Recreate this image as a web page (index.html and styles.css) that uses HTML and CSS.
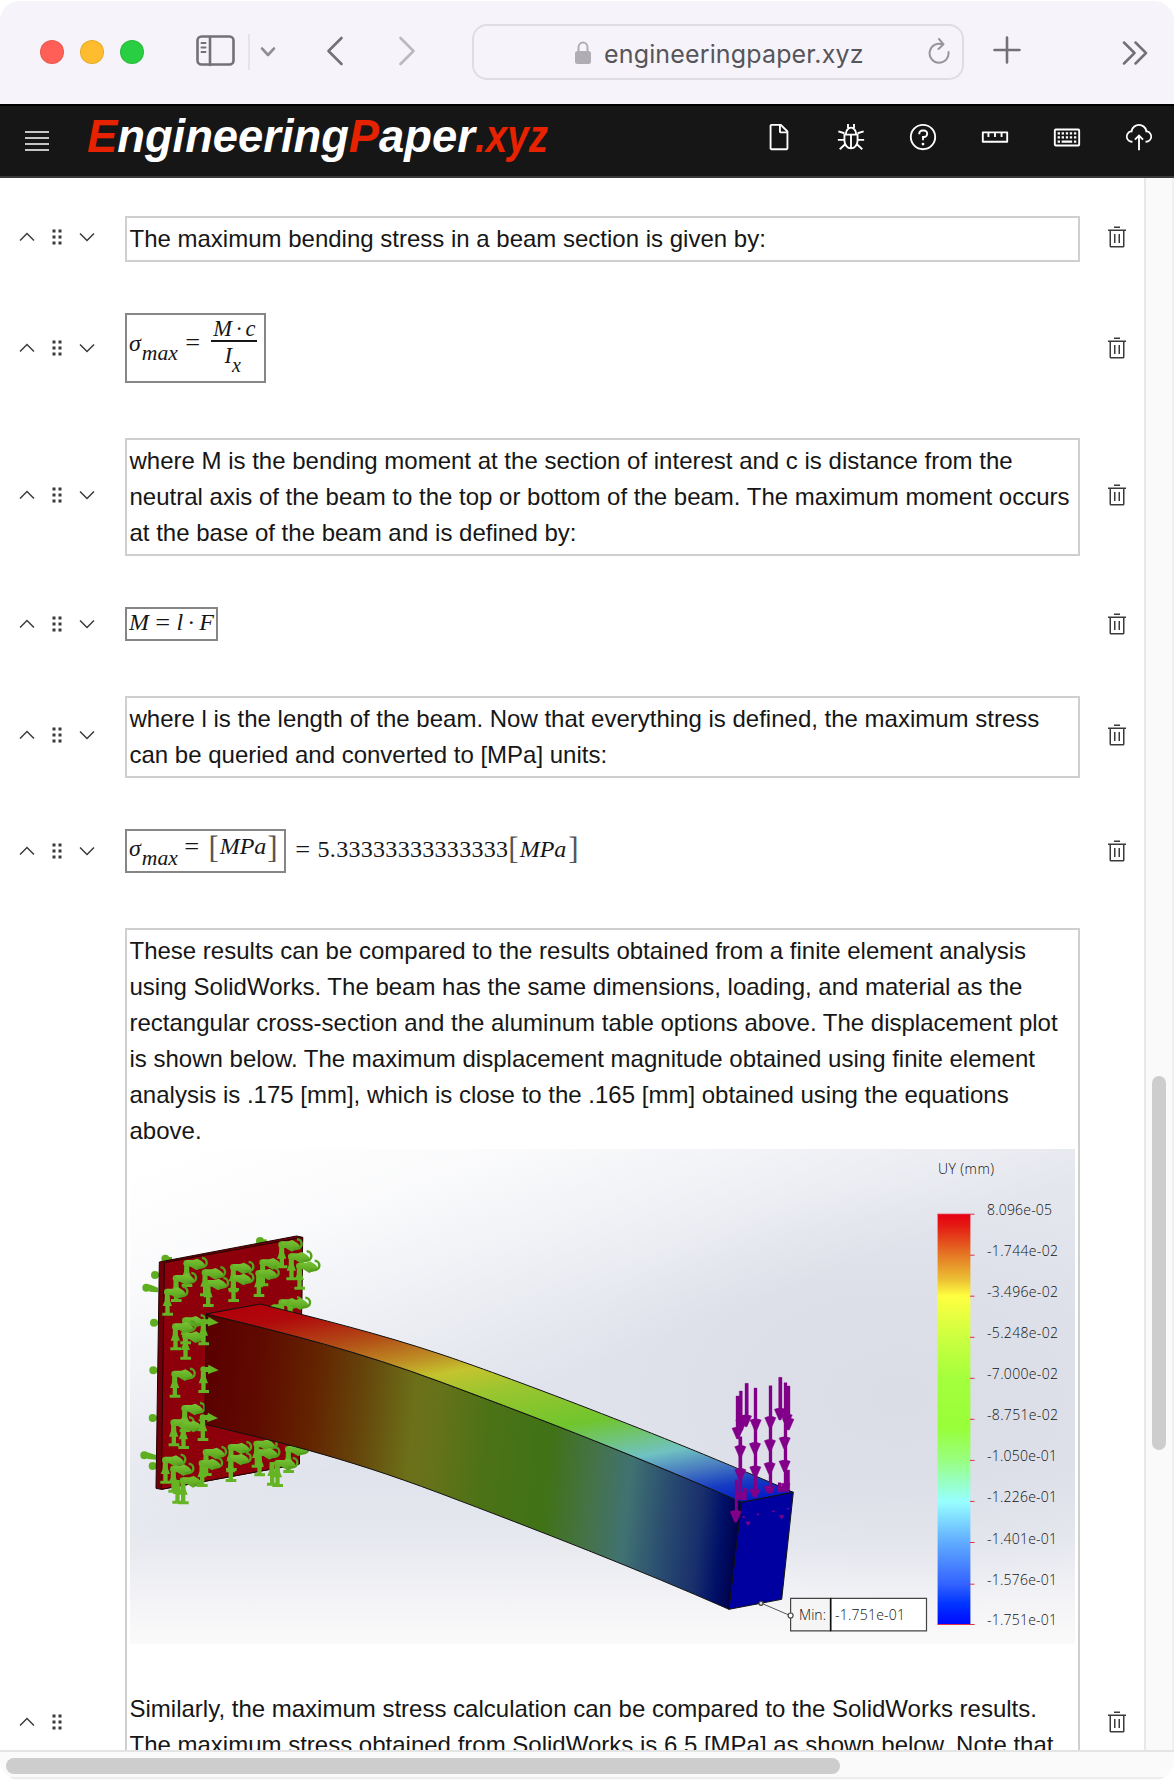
FILE: index.html
```html
<!DOCTYPE html>
<html lang="en">
<head>
<meta charset="utf-8">
<title>EngineeringPaper.xyz</title>
<link rel="stylesheet" href="styles.css">
</head>
<body>
<svg class="defs" aria-hidden="true">
  <symbol id="up" viewBox="0 0 32 32"><path d="M16 10 26 20 24.6 21.4 16 12.8 7.4 21.4 6 20z"/></symbol>
  <symbol id="down" viewBox="0 0 32 32"><path d="M16 22 6 12 7.4 10.6 16 19.2 24.6 10.6 26 12z"/></symbol>
  <symbol id="drag" viewBox="0 0 32 32"><path d="M10 6h4v4h-4zM18 6h4v4h-4zM10 14h4v4h-4zM18 14h4v4h-4zM10 22h4v4h-4zM18 22h4v4h-4z"/></symbol>
  <symbol id="trash" viewBox="0 0 32 32"><path d="M12 12h2v12h-2zM18 12h2v12h-2zM4 6v2h2v20a2 2 0 0 0 2 2h16a2 2 0 0 0 2-2V8h2V6zM8 28V8h16v20zM12 2h8v2h-8z"/></symbol>
</svg>
<div class="window">
  <header class="browser">
    <div class="lights"><i class="red"></i><i class="amber"></i><i class="green"></i></div>
    <svg class="sidebar" viewBox="0 0 40 32"><rect x="1.5" y="1.5" width="36" height="28" rx="4"/><path d="M14 2v28"/><path class="thin" d="M5.5 8h4M5.5 12.500h4M5.500 17h4"/></svg>
    <span class="divider"></span>
    <svg class="caret" viewBox="0 0 16 12"><path d="M2 2.500l6 6.500 6-6.500"/></svg>
    <svg class="back" viewBox="0 0 18 30"><path d="M15.500 2 2.500 15l13 13"/></svg>
    <svg class="fwd" viewBox="0 0 18 30"><path d="M2.500 2l13 13-13 13"/></svg>
    <div class="address">
      <svg class="lock" viewBox="0 0 16 24"><rect x="0" y="10" width="16" height="13" rx="2.500"/><path d="M3.500 11V6.500a4.500 5 0 0 1 9 0V11"/></svg>
      <span class="url">engineeringpaper.xyz</span>
      <svg class="reload" viewBox="0 0 22 26"><path d="M14.500 6.400A9.500 9.500 0 1 0 20.500 14M11 1l4.500 5.300L10.500 11"/></svg>
    </div>
    <svg class="plus" viewBox="0 0 28 28"><path d="M14 1.500v25M1.500 14h25"/></svg>
    <svg class="more" viewBox="0 0 26 24"><path d="M2 1.500 12.500 12 2 22.500M13.500 1.500 24 12 13.500 22.500"/></svg>
  </header>

  <nav class="appbar">
    <svg class="menu" viewBox="0 0 24 20"><path d="M0 1h24M0 7h24M0 13h24M0 19h24"/></svg>
    <h1 class="logo"><b>E</b>ngineering<b>P</b>aper<b class="tld">.xyz</b></h1>
    <div class="tools">
      <svg viewBox="0 0 32 32"><path d="M25.700 9.300l-7-7C18.500 2.100 18.300 2 18 2H8C6.900 2 6 2.900 6 4v24c0 1.100.9 2 2 2h16c1.100 0 2-.9 2-2V10c0-.3-.1-.5-.3-.7zM18 4.400l5.600 5.600H18zM24 28H8V4h8v6c0 1.100.9 2 2 2h6z"/></svg>
      <svg class="line" viewBox="0 0 32 32"><path d="M9 13.500h14V20a7 8 0 0 1-14 0zM10.500 13a5.500 7 0 0 1 11 0M16 14v13M12.800 6.500V2M19.200 6.500V2M9 12 2.500 10M23 12l6.500-2M9 19H2M23 19h7M10 23.500 4 29M22 23.500l6 5.500"/></svg>
      <svg viewBox="0 0 32 32"><path d="M16 2a14 14 0 1 0 14 14A14 14 0 0 0 16 2zm0 26a12 12 0 1 1 12-12 12 12 0 0 1-12 12z"/><circle cx="16" cy="23.500" r="1.500"/><path d="M17 8h-1.500A4.490 4.490 0 0 0 11 12.500v.5h2v-.5a2.500 2.500 0 0 1 2.500-2.500H17a2.500 2.500 0 0 1 0 5h-2v4.500h2V17a4.500 4.500 0 0 0 0-9z"/></svg>
      <svg viewBox="0 0 32 32"><path d="M29 10H3a1 1 0 0 0-1 1v10a1 1 0 0 0 1 1h26a1 1 0 0 0 1-1V11a1 1 0 0 0-1-1zm-1 10H4v-8h4v4h2v-4h5v4h2v-4h5v4h2v-4h4z"/></svg>
      <svg viewBox="0 0 32 32"><path d="M28 26H4a2 2 0 0 1-2-2V9a2 2 0 0 1 2-2h24a2 2 0 0 1 2 2v15a2 2 0 0 1-2 2zM4 9v15h24V9zM6 11h2.500v2.300H6zM10.300 11h2.500v2.300h-2.500zM14.700 11h2.500v2.300h-2.500zM19 11h2.500v2.300H19zM23.400 11h2.500v2.300h-2.500zM6 15.300h2.500v2.300H6zM10.300 15.300h2.500v2.300h-2.500zM14.700 15.300h2.500v2.300h-2.500zM19 15.300h2.500v2.300H19zM23.400 15.300h2.500v2.300h-2.500zM6 19.700h2.500V22H6zM10.300 19.700h11.200V22H10.300zM23.400 19.700h2.500V22h-2.500z"/></svg>
      <svg viewBox="0 0 32 32"><path d="M11 18l1.410 1.410L15 16.830V30h2V16.830l2.590 2.580L21 18l-5-5z"/><path d="M23.500 22H23v-2h.5a4.500 4.500 0 0 0 .36-9H23l-.1-.82a7 7 0 0 0-13.880 0L9 11h-.86a4.500 4.500 0 0 0 .36 9H9v2h-.5A6.500 6.500 0 0 1 7.200 9.140a9 9 0 0 1 17.600 0A6.500 6.500 0 0 1 23.500 22z"/></svg>
    </div>
  </nav>

  <div class="body">
    <main class="sheet">
      <section class="cell text first">
        <div class="controls"><svg><use href="#up"/></svg><svg><use href="#drag"/></svg><svg><use href="#down"/></svg></div>
        <div class="note">The maximum bending stress in a beam section is given by:</div>
        <svg class="trash"><use href="#trash"/></svg>
      </section>

      <section class="cell math">
        <div class="controls"><svg><use href="#up"/></svg><svg><use href="#drag"/></svg><svg><use href="#down"/></svg></div>
        <div class="formula stress">
          <span class="sym">σ<sub>max</sub></span><span class="eq">=</span>
          <span class="frac"><span class="num">M<em>·</em>c</span><span class="den">I<sub>x</sub></span></span>
        </div>
        <svg class="trash"><use href="#trash"/></svg>
      </section>

      <section class="cell text">
        <div class="controls"><svg><use href="#up"/></svg><svg><use href="#drag"/></svg><svg><use href="#down"/></svg></div>
        <div class="note">where M is the bending moment at the section of interest and c is distance from the<br>neutral axis of the beam to the top or bottom of the beam. The maximum moment occurs<br>at the base of the beam and is defined by:</div>
        <svg class="trash"><use href="#trash"/></svg>
      </section>

      <section class="cell math">
        <div class="controls"><svg><use href="#up"/></svg><svg><use href="#drag"/></svg><svg><use href="#down"/></svg></div>
        <div class="formula moment"><span class="sym">M</span><span class="eq">=</span><span class="sym">l</span><span class="dot">·</span><span class="sym">F</span></div>
        <svg class="trash"><use href="#trash"/></svg>
      </section>

      <section class="cell text">
        <div class="controls"><svg><use href="#up"/></svg><svg><use href="#drag"/></svg><svg><use href="#down"/></svg></div>
        <div class="note">where l is the length of the beam. Now that everything is defined, the maximum stress<br>can be queried and converted to [MPa] units:</div>
        <svg class="trash"><use href="#trash"/></svg>
      </section>

      <section class="cell math">
        <div class="controls"><svg><use href="#up"/></svg><svg><use href="#drag"/></svg><svg><use href="#down"/></svg></div>
        <div class="query">
          <div class="formula result"><span class="sym">σ<sub>max</sub></span><span class="eq">=</span><span class="br">[</span><span class="unit">MPa</span><span class="br">]</span></div>
          <div class="answer"><span class="eq">=</span><span class="digits">5.33333333333333</span><span class="br">[</span><span class="unit">MPa</span><span class="br">]</span></div>
        </div>
        <svg class="trash"><use href="#trash"/></svg>
      </section>

      <section class="cell text long">
        <div class="controls"><svg><use href="#up"/></svg><svg><use href="#drag"/></svg></div>
        <div class="note">
          <p>These results can be compared to the results obtained from a finite element analysis<br>using SolidWorks. The beam has the same dimensions, loading, and material as the<br>rectangular cross-section and the aluminum table options above. The displacement plot<br>is shown below. The maximum displacement magnitude obtained using finite element<br>analysis is .175 [mm], which is close to the .165 [mm] obtained using the equations<br>above.</p>
          <svg class="plot" viewBox="130 1149 945 495">
            <defs>
              <linearGradient id="bg" x1="0" y1="0" x2="0" y2="1"><stop offset="0" stop-color="#e6e8ef"/><stop offset=".3" stop-color="#e0e3ec"/><stop offset=".65" stop-color="#e0e3ec"/><stop offset=".78" stop-color="#e6e8ef"/><stop offset=".92" stop-color="#f4f4f7"/><stop offset="1" stop-color="#fafafa"/></linearGradient>
              <linearGradient id="glow" gradientUnits="userSpaceOnUse" x1="180" y1="1150" x2="310" y2="1480"><stop offset="0" stop-color="#fff"/><stop offset=".3" stop-color="#fff" stop-opacity=".85"/><stop offset="1" stop-color="#fff" stop-opacity="0"/></linearGradient>
              <radialGradient id="shade" gradientUnits="userSpaceOnUse" cx="900" cy="1400" r="330" gradientTransform="translate(0 500) scale(1 .64)"><stop offset="0" stop-color="#d8dbe4" stop-opacity=".8"/><stop offset="1" stop-color="#d8dbe4" stop-opacity="0"/></radialGradient>
              <linearGradient id="side" gradientUnits="userSpaceOnUse" x1="206" y1="1360" x2="752" y2="1415"><stop offset="0" stop-color="#5a0000"/><stop offset=".1" stop-color="#5f0b00"/><stop offset=".2" stop-color="#632300"/><stop offset=".29" stop-color="#65450b"/><stop offset=".385" stop-color="#6c7019"/><stop offset=".43" stop-color="#66721a"/><stop offset=".52" stop-color="#4d7216"/><stop offset=".64" stop-color="#407216"/><stop offset=".72" stop-color="#457347"/><stop offset=".79" stop-color="#417272"/><stop offset=".86" stop-color="#2a4d70"/><stop offset=".925" stop-color="#192f6c"/><stop offset=".965" stop-color="#001068"/><stop offset="1" stop-color="#000048"/></linearGradient>
              <linearGradient id="top" gradientUnits="userSpaceOnUse" x1="206" y1="1314" x2="257.400" y2="1591.600"><stop offset="0" stop-color="#b0000a"/><stop offset=".07" stop-color="#b00a0c"/><stop offset=".19" stop-color="#b24c16"/><stop offset=".29" stop-color="#be8c24"/><stop offset=".36" stop-color="#c4c42e"/><stop offset=".45" stop-color="#9cc52e"/><stop offset=".62" stop-color="#70c52e"/><stop offset=".7" stop-color="#70c478"/><stop offset=".775" stop-color="#70c2c2"/><stop offset=".86" stop-color="#4678c0"/><stop offset=".93" stop-color="#163cc2"/><stop offset="1" stop-color="#001cc8"/></linearGradient>
              <linearGradient id="scale" x1="0" y1="0" x2="0" y2="1"><stop offset="0" stop-color="#e60012"/><stop offset=".03" stop-color="#e41c14"/><stop offset=".1" stop-color="#e57824"/><stop offset=".16" stop-color="#ecc034"/><stop offset=".2" stop-color="#ffff40"/><stop offset=".3" stop-color="#ccff40"/><stop offset=".4" stop-color="#a4ff3c"/><stop offset=".52" stop-color="#98ff38"/><stop offset=".6" stop-color="#98ff80"/><stop offset=".7" stop-color="#98ffff"/><stop offset=".8" stop-color="#60acff"/><stop offset=".9" stop-color="#3464ff"/><stop offset=".95" stop-color="#0034ff"/><stop offset="1" stop-color="#0008ff"/></linearGradient>
              <linearGradient id="clampfill" x1="0" y1="0" x2="0" y2="1"><stop offset="0" stop-color="#78c434"/><stop offset="1" stop-color="#56a01c"/></linearGradient>
              <g id="post"><path d="M-7 0H7l1 26 6 16H7v20h10v9h-32v-9h9V42h-8l6-16z"/></g>
              <g id="clamp"><use href="#post"/><circle r="10"/><path d="M0-10h20l12-4 14 8 8 8v6L30 21 12 10H0z" fill="url(#clampfill)"/><path d="M46-16a13 13 0 0 1 0 28l-12 2" fill="none" stroke="#55a01c" stroke-width="7.500"/></g>
              <g id="cone"><use href="#post"/><circle r="9"/><path d="M0-7h14l2-7 30 17-32 11V8H0z"/></g>
              <g id="knob"><circle r="12"/><path d="M0-5h20v10H0z"/></g>
              <path id="head" d="M-17 0q17-8 34 0L3 32h-6z"/>
            </defs>
            <path fill="url(#bg)" d="M130 1149h945v495H130z"/>
            <path fill="url(#glow)" d="M130 1149h945v495H130z"/>
            <path fill="url(#shade)" d="M130 1149h945v495H130z"/>

            <g transform="translate(120 1140) scale(.33333)">
              <g fill="#5fae20"><use href="#knob" x="105" y="405"/><use href="#knob" x="79" y="443"/><path d="m88 433 26 10v14l-26-2z"/><use href="#knob" x="102" y="548"/><use href="#knob" x="100" y="691"/><use href="#knob" x="98" y="834"/><use href="#knob" x="73" y="946"/><path d="m82 937 26 8v14l-26-2z"/><use href="#knob" x="98" y="978"/><use href="#knob" x="136" y="356"/><use href="#knob" x="420" y="303"/></g>
              <path d="M118 366 530 288l18 4-10 680-414 76-16-3z" fill="#6d0008" stroke="#200" stroke-width="3"/>
              <path d="m133 368 415-76-10 680-414 76z" fill="#8d000b" stroke="#200" stroke-width="3"/>
              <g fill="#64b423">
                <use href="#clamp" x="200" y="370"/><use href="#clamp" x="168" y="415"/><use href="#clamp" x="142" y="456"/>
                <use href="#clamp" x="255" y="398"/><use href="#clamp" x="264" y="430"/><use href="#clamp" x="340" y="382"/><use href="#clamp" x="340" y="415"/>
                <use href="#clamp" x="428" y="368"/><use href="#clamp" x="416" y="400"/><use href="#clamp" x="485" y="314"/><use href="#clamp" x="514" y="350"/><use href="#clamp" x="538" y="378"/>
                <use href="#clamp" x="485" y="488"/><use href="#clamp" x="510" y="489"/><path d="m440 505 20-12 25 0v20z"/>
                <use href="#clamp" x="196" y="542"/><use href="#clamp" x="166" y="560"/><use href="#clamp" x="196" y="588"/>
                <use href="#clamp" x="164" y="702"/><use href="#clamp" x="194" y="805"/><use href="#clamp" x="161" y="848"/><use href="#clamp" x="190" y="856"/>
                <use href="#clamp" x="136" y="960"/><use href="#clamp" x="160" y="987"/><use href="#clamp" x="189" y="1022"/><use href="#post" x="172" y="1020"/>
                <use href="#clamp" x="258" y="937"/><use href="#clamp" x="246" y="970"/><use href="#clamp" x="333" y="922"/><use href="#clamp" x="332" y="955"/>
                <use href="#clamp" x="410" y="912"/><use href="#clamp" x="418" y="938"/><use href="#clamp" x="505" y="928"/><use href="#clamp" x="472" y="970"/><use href="#post" x="456" y="966"/>
              </g>
            </g>

            <g stroke="#111" stroke-width="1" stroke-linejoin="round">
              <path fill="url(#side)" d="M206 1314C290 1334 360 1352 440 1381.700S620 1449 741.700 1502.300L729 1609.300C640 1570 540 1531 440 1493.300S270 1440 205 1424.300z"/>
              <path fill="url(#top)" d="m206 1314 54-10C320 1319 380 1334 440 1354S660 1434 793.300 1492.300L741.700 1502.300C620 1449 520 1411.400 440 1381.700S290 1334 206 1314z"/>
              <path fill="#0000a0" d="m741.700 1502.300 51.600-10-11.600 107-52.700 10z"/>
            </g>
            <g transform="translate(120 1140) scale(.33333)" fill="#64b423"><use href="#cone" x="250" y="545"/><use href="#cone" x="250" y="688"/><use href="#cone" x="248" y="832"/></g>

            <g transform="translate(440 1340) scale(.33333)" fill="#820089" stroke="#820089" stroke-width="1">
              <path d="M888 168h10v94h-10zM898 153h9v97h-9zM915 130h10v95h-10zM942 144h9v320h-9zM987 137h9v315h-9zM1016 112h10v94h-10zM1032 128h9v320h-9zM1041 138h9v97h-9zM896 290h10v184h-10zM885 420h8v100h-8zM912 445h8v35h-8zM1014 428h9v28h-9zM1040 390h9v60h-9z"/>
              <use href="#head" x="893" y="265"/><use href="#head" x="904" y="240"/><use href="#head" x="918" y="228"/><use href="#head" x="901" y="320"/><use href="#head" x="901" y="389"/><path d="M888 457h30v14l-8 8h-14z"/><use href="#head" x="887" y="515"/>
              <use href="#head" x="947" y="240"/><use href="#head" x="945" y="311"/><use href="#head" x="946" y="381"/><path d="M928 449q17-6 33 0l-11 23h-10z"/>
              <use href="#head" x="991" y="233"/><use href="#head" x="990" y="302"/><use href="#head" x="989" y="371"/><path d="M972 440q17-6 33 0l-9 20h-14z"/>
              <use href="#head" x="1020" y="208"/><use href="#head" x="1040" y="225"/><use href="#head" x="1045" y="238"/><use href="#head" x="1034" y="294"/><use href="#head" x="1034" y="364"/><path d="M1024 430h26l-5 25h-20z"/>
              <path d="M917 545h14l-7 12zM1018 526h14l-7 12zM951 521h6v4h-6zM997 512h6v4h-6zM1041 504h5v4h-5zM908 529h6v4h-6z"/>
            </g>

            <path d="m762 1603.500 28 12" stroke="#555" fill="none"/>
            <g stroke="#444" stroke-width="1.200"><path fill="#f5f5f5" d="M790.600 1598.300h40v32.600h-40z"/><path fill="#fff" d="M830.500 1598.300h96v32.600h-96z"/><path stroke="#111" stroke-width="1.600" d="M830.700 1598v33"/><circle cx="761" cy="1603.300" r="2" fill="#ddd"/><circle cx="790.600" cy="1615.500" r="2.500" fill="#fff"/></g>
            <path fill="url(#scale)" d="M937.600 1214h32.800v410.500h-32.800z"/>
            <path stroke="#e03048" fill="none" d="M937.600 1214.200h37M970 1255.200h4.500M970 1296.200h4.500M970 1337.300h4.500M970 1378.300h4.500M970 1419.300h4.500M970 1460.400h4.500M970 1501.400h4.500M970 1542.500h4.500M970 1584.200h4.500M937.600 1624.500h37"/>
            <g class="ticks">
              <text x="938" y="1174" textLength="56">UY (mm)</text>
              <text x="987" y="1215" textLength="65">8.096e-05</text>
              <text x="987" y="1256" textLength="71">-1.744e-02</text>
              <text x="987" y="1297" textLength="71">-3.496e-02</text>
              <text x="987" y="1338" textLength="71">-5.248e-02</text>
              <text x="987" y="1379" textLength="71">-7.000e-02</text>
              <text x="987" y="1420" textLength="71">-8.751e-02</text>
              <text x="987" y="1461" textLength="70">-1.050e-01</text>
              <text x="987" y="1502" textLength="70">-1.226e-01</text>
              <text x="987" y="1543.500" textLength="70">-1.401e-01</text>
              <text x="987" y="1585" textLength="70">-1.576e-01</text>
              <text x="987" y="1625" textLength="70">-1.751e-01</text>
              <text x="799" y="1620" textLength="27">Min:</text>
              <text x="835" y="1620" textLength="70">-1.751e-01</text>
            </g>
          </svg>
          <p>Similarly, the maximum stress calculation can be compared to the SolidWorks results.<br>The maximum stress obtained from SolidWorks is 6.5 [MPa] as shown below. Note that</p>
        </div>
        <svg class="trash"><use href="#trash"/></svg>
      </section>
    </main>
    <div class="vtrack"><div class="vthumb"></div></div>
  </div>
  <div class="htrack"><div class="hthumb"></div></div>
</div>
</body>
</html>
```
FILE: styles.css
```css
* { box-sizing: border-box; }
body { margin: 0; background: #fff; color: #161616; font-family: "Liberation Sans", Arial, sans-serif; }
svg { display: block; flex: none; }
.defs { display: none; }

.window { display: flex; flex-direction: column; width: 1174px; height: 1779px; margin-top: 1px; overflow: hidden; border-radius: 20px; background: #fafafa; }

.browser { display: flex; align-items: center; height: 103px; padding: 0 26px 2px 40px; background: #f6f4fa; }
.browser svg { fill: none; stroke: #737177; stroke-width: 2.600; stroke-linecap: round; stroke-linejoin: round; }
.lights { display: flex; gap: 16px; }
.lights i { width: 24px; height: 24px; border-radius: 50%; border: 1px solid #00000018; }
.red { background: #ff5f57; }
.amber { background: #febc2e; }
.green { background: #2ace42; }
.browser .sidebar { width: 40px; height: 32px; margin: 0 0 1px 52px; }
.browser .sidebar .thin { stroke-width: 2; }
.divider { width: 2px; height: 36px; margin-left: 12px; background: #e6e4ea; }
.browser .caret { width: 16px; height: 12px; margin-left: 10px; stroke: #918f96; }
.browser .back { width: 18px; height: 30px; margin: 0 0 2px 50px; }
.browser .fwd { width: 18px; height: 30px; margin: 0 0 2px 54px; stroke: #bbb9c0; }
.address { display: flex; align-items: center; width: 492px; height: 56px; margin-left: 56px; padding: 2px 12px 0 101px; border: 2px solid #dfdde3; border-radius: 15px; }
.browser .lock { width: 16px; height: 24px; fill: #b0aeb4; stroke: none; }
.lock path { fill: none; stroke: #b0aeb4; stroke-width: 2; }
.url { margin: 2px 0 0 13px; color: #565559; font-family: Inter, sans-serif; font-size: 25px; line-height: 32px; letter-spacing: .15px; }
.browser .reload { width: 22px; height: 26px; margin: 0 0 4px auto; stroke: #98969c; stroke-width: 2; }
.browser .plus { width: 28px; height: 28px; margin: 0 0 3px 29px; }
.browser .more { width: 26px; height: 24px; margin: 3px 0 0 auto; stroke-width: 2.500; }

.appbar { display: flex; align-items: center; height: 74px; padding: 0 20px 8px 25px; border-top: 2px solid #000; border-bottom: 2px solid #393939; background: #161616; }
.menu { width: 24px; height: 20px; margin-top: 8px; fill: none; stroke: #fff; stroke-width: 1.600; }
.logo { width: 466px; margin: 0 0 2px 38px; color: #fff; font: italic bold 46px/60px "Liberation Sans", Arial, sans-serif; white-space: nowrap; transform: scaleX(.985); transform-origin: left; }
.logo b { color: #e62200; }
.tld { display: inline-block; transform: scaleX(.85); transform-origin: left; }
.tools { display: flex; gap: 42px; margin: 0 0 1px auto; }
.tools svg { width: 30px; height: 30px; fill: #fff; }
.tools .line { fill: none; stroke: #fff; stroke-width: 2; }

.body { display: flex; height: 1572px; }
.sheet { width: 1146px; overflow: hidden; padding-top: 38px; background: #fff; border-right: 2px solid #e8e8e8; }
.vtrack { flex: 1; padding: 898px 6px 0; border-right: 2px solid #f0f0f0; }
.vthumb { height: 374px; border-radius: 8px; background: #cdcdcd; }
.htrack { height: 29px; padding: 6px 6px 0; border-top: 2px solid #e4e4e4; border-bottom: 2px solid #ededed; }
.hthumb { width: 834px; height: 16px; border-radius: 8px; background: #cdcdcd; }

.cell { display: grid; grid-template-columns: 125px 955px 64px; align-items: center; }
.controls use, .trash use { fill: #3a3a3a; }
.controls { display: flex; gap: 6px; padding-left: 15px; }
.controls svg, .trash { width: 24px; height: 24px; }
.trash { margin-left: 25px; }
.text { margin-top: 55px; }
.text.first { margin-top: 0; }
.text .controls, .text > .trash { margin-bottom: 4px; }
.math { margin-top: 51px; }
.note { border: 2px solid #cfcfcf; padding: 3px 0 3px 2.500px; font-size: 24px; line-height: 36px; white-space: nowrap; }
.note p { margin: 0; }
.long { height: 1592px; }
.long .note { height: 1592px; }
.plot { width: 945px; height: 495px; margin: 0 0 47px .5px; }
.ticks text { font: 300 14px "Open Sans", "Noto Sans", sans-serif; fill: #111; }

.formula, .answer { display: flex; width: max-content; font: italic 24px/30px "Liberation Serif", serif; }
.formula { border: 2px solid #868686; padding-left: 2px; }
.formula sub { margin-left: 1px; font-size: 21.600px; line-height: 0; vertical-align: -9px; }
.eq, .digits, .br, .dot { font-style: normal; }
.eq { display: inline-block; transform: scaleX(1.1); }
.stress { width: 141px; height: 70px; padding-top: 13px; }
.stress .eq { margin-left: 8px; margin-top: -1px; }
.frac { display: flex; flex-direction: column; width: 46px; height: 54px; margin: -14px 0 0 12px; font-size: 22.500px; }
.num { height: 28px; border-bottom: 2px solid #161616; text-align: center; line-height: 30px; white-space: nowrap; }
.num em { margin: 0 4px; }
.den { padding-left: 13px; line-height: 28px; }
.frac sub { font-size: 20px; margin-left: 0; }
.moment { width: 93px; height: 34px; line-height: 27px; }
.moment .eq { margin: 0 7px; }
.moment .dot { margin: 0 4px; }
.query { display: flex; }
.result { width: 161px; height: 44px; line-height: 34px; }
.br { font-size: 31px; color: #555; }
.result .br { line-height: 33px; }
.result .eq { margin: -2px 0 0 7px; }
.result .eq + .br { margin-left: 10px; }
.answer .br { line-height: 40px; }
.unit { margin: 0 2px 0 1px; }
.result .unit { margin: -2px 1px 0; }
.answer { margin-left: 10px; line-height: 40px; }
.digits { margin-left: 8px; letter-spacing: .3px; }
```
